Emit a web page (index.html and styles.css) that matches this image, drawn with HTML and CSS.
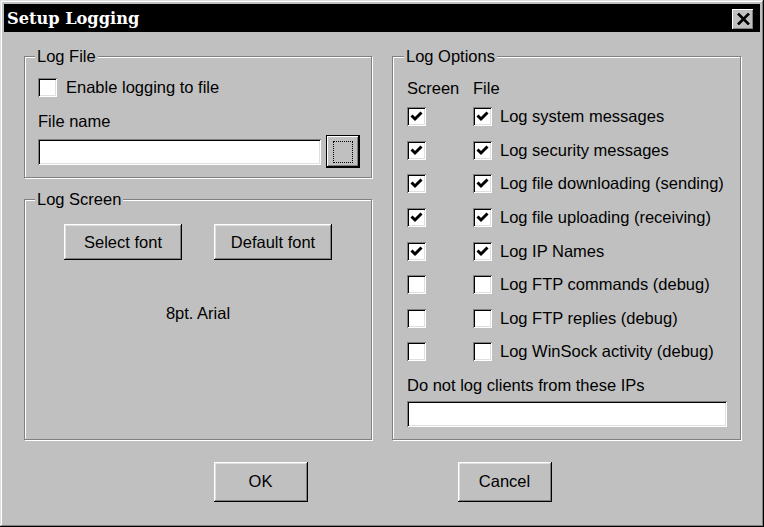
FILE: index.html
```html
<!DOCTYPE html>
<html lang="en">
<head>
    <meta charset="UTF-8">
    <title>Setup Logging</title>
    <link rel="stylesheet" href="styles.css">
</head>
<body>
    <div class="window">
        <div class="titlebar">
            <span class="title">Setup Logging</span>
            <button class="close" title="Close">
                <svg width="13" height="12" viewBox="0 0 13 12"><path d="M1 0.5 L12 11.5 M12 0.5 L1 11.5" stroke="#000" stroke-width="2.6" fill="none"/></svg>
            </button>
        </div>

        <div class="content">
            <div class="columns">
                <div class="col-left">
                    <fieldset class="group log-file">
                        <legend>Log File</legend>
                        <label class="check"><span class="box"></span>Enable logging to file</label>
                        <div class="field-label">File name</div>
                        <div class="file-row">
                            <div class="input"></div>
                            <button class="btn browse"><span class="focus-rect"></span></button>
                        </div>
                    </fieldset>

                    <fieldset class="group log-screen">
                        <legend>Log Screen</legend>
                        <div class="font-buttons">
                            <button class="btn">Select font</button>
                            <button class="btn">Default font</button>
                        </div>
                        <div class="font-name">8pt. Arial</div>
                    </fieldset>
                </div>

                <fieldset class="group log-options">
                    <legend>Log Options</legend>
                    <div class="opt-grid">
                        <div class="opt-head">Screen</div>
                        <div class="opt-head">File</div>
                        <div></div>
                    </div>
                    <div class="opt-list" id="optList"></div>
                    <div class="field-label ip-label">Do not log clients from these IPs</div>
                    <div class="input ip-input"></div>
                </fieldset>
            </div>

            <div class="actions">
                <button class="btn dlg">OK</button>
                <button class="btn dlg">Cancel</button>
            </div>
        </div>
    </div>

    <script>
        const options = [
            ['Log system messages', true],
            ['Log security messages', true],
            ['Log file downloading (sending)', true],
            ['Log file uploading (receiving)', true],
            ['Log IP Names', true],
            ['Log FTP commands (debug)', false],
            ['Log FTP replies (debug)', false],
            ['Log WinSock activity (debug)', false]
        ];

        const tick = '<svg width="15" height="15" viewBox="0 0 15 15"><path d="M2.5 6.5 L6 10 L12.5 3.5" stroke="#000" stroke-width="3" fill="none"/></svg>';

        function box(on) {
            return `<span class="box">${on ? tick : ''}</span>`;
        }

        const list = document.getElementById('optList');
        list.innerHTML = options.map(([text, on]) =>
            `<div class="opt-row">${box(on)}${box(on)}<span>${text}</span></div>`
        ).join('');
    </script>
</body>
</html>
```

FILE: styles.css
```css
body { margin: 0; font-family: "Liberation Sans", Arial, sans-serif; font-size: 16.5px; line-height: 19px; color: #000; background: #c0c0c0; }
button { font: inherit; color: inherit; padding: 0; margin: 0; }

/* window frame */
.window { box-sizing: border-box; width: 764px; height: 527px; padding: 4px; background: #c0c0c0; display: flex; flex-direction: column;
    box-shadow: inset -1px -1px #000, inset 1px 1px #dfdfdf, inset -2px -2px #808080, inset 2px 2px #fff; }
.titlebar { height: 28px; background: #000; display: flex; align-items: center; justify-content: space-between; padding: 0 6px 0 3px; }
.title { color: #fff; font-family: "DejaVu Serif", serif; font-weight: bold; font-size: 16.2px; }
.close { width: 22px; height: 21px; margin-top: 2px; border: none; background: #c0c0c0; display: flex; align-items: center; justify-content: center;
    box-shadow: inset -1px -1px #000, inset 1px 1px #fff, inset -2px -2px #808080; }

.content { flex: 1; padding: 15px 19px 0 20px; display: flex; flex-direction: column; }
.columns { display: flex; gap: 20px; }
.col-left { width: 348px; display: flex; flex-direction: column; gap: 12px; }

/* etched group boxes */
.group { margin: 0; min-width: 0; box-sizing: border-box; border: 1px solid #808080; box-shadow: 1px 1px 0 #fff, inset 1px 1px 0 #fff; }
.group legend { padding: 0 2px; margin-left: -3px; line-height: 19px; background: #c0c0c0; }

.log-file { padding: 11px 11px 9px 13px; }
.log-screen { flex: 1; padding: 15px 13px 0 13px; }
.log-options { width: 349px; padding: 13px 13px 12px 14px; }

/* 3d controls */
.btn { background: #c0c0c0; border: none; box-shadow: inset -1px -1px #000, inset 1px 1px #fff, inset -2px -2px #808080, inset 2px 2px #dfdfdf; }
.input { height: 26px; background: #fff; box-sizing: border-box; box-shadow: inset 1px 1px #808080, inset -1px -1px #fff, inset 2px 2px #000, inset -2px -2px #dfdfdf; }
.box { width: 19px; height: 19px; flex: none; box-sizing: border-box; padding: 2px; background: #fff; display: inline-block;
    box-shadow: inset 1px 1px #808080, inset -1px -1px #fff, inset 2px 2px #000, inset -2px -2px #dfdfdf; }
.box svg { display: block; }

.check { display: flex; align-items: center; gap: 9px; height: 20px; }
.field-label { margin-top: 15px; }
.file-row { display: flex; align-items: center; gap: 5px; height: 33px; margin-top: 4px; }
.file-row .input { flex: 1; }
.browse { width: 34px; height: 33px; display: flex; align-items: center; justify-content: center;
    box-shadow: inset -2px -2px #000, inset 1px 1px #000, inset 2px 2px #fff, inset -3px -3px #808080; }
.focus-rect { width: 20px; height: 22px; border: 1px dotted #000; box-sizing: border-box; }

.font-buttons { display: flex; justify-content: center; gap: 32px; }
.font-buttons .btn { width: 118px; height: 36px; }
.font-name { text-align: center; margin-top: 44px; }

/* log options table */
.opt-grid, .opt-row { display: grid; grid-template-columns: 66px 27px 1fr; align-items: center; }
.opt-head { height: 19px; }
.opt-list { margin-top: 2px; }
.opt-row { height: 33.6px; }
.ip-label { margin-top: 7px; }
.ip-input { margin-top: 6px; width: 320px; }

.actions { display: flex; justify-content: center; gap: 150px; margin-top: 22px; }
.dlg { width: 94px; height: 40px; }
```
